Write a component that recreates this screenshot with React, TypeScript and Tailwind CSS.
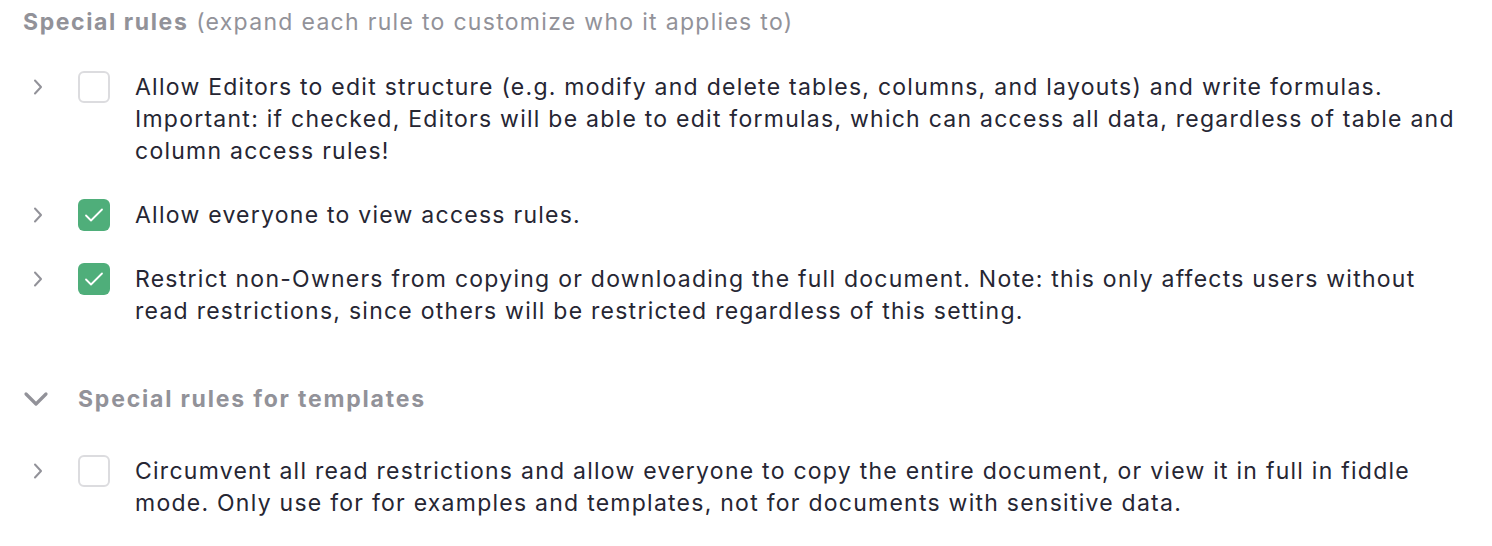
import React from "react";

type Rule = { text: string; checked: boolean };

const mainRules: Rule[] = [
  {
    text: "Allow Editors to edit structure (e.g. modify and delete tables, columns, and layouts) and write formulas. Important: if checked, Editors will be able to edit formulas, which can access all data, regardless of table and column access rules!",
    checked: false,
  },
  { text: "Allow everyone to view access rules.", checked: true },
  {
    text: "Restrict non-Owners from copying or downloading the full document. Note: this only affects users without read restrictions, since others will be restricted regardless of this setting.",
    checked: true,
  },
];

const templateRules: Rule[] = [
  {
    text: "Circumvent all read restrictions and allow everyone to copy the entire document, or view it in full in fiddle mode. Only use for for examples and templates, not for documents with sensitive data.",
    checked: false,
  },
];

function ChevronRight() {
  return (
    <svg width="14" height="16" viewBox="0 0 14 16" fill="none">
      <path d="M4 1.5 L10 8 L4 14.5" stroke="#929299" strokeWidth="2" strokeLinecap="round" strokeLinejoin="round" />
    </svg>
  );
}

function ChevronDown() {
  return (
    <svg width="26" height="18" viewBox="0 0 26 18" fill="none">
      <path d="M3 4 L13 14 L23 4" stroke="#929299" strokeWidth="3.2" strokeLinecap="round" strokeLinejoin="round" />
    </svg>
  );
}

function Checkbox({ checked }: { checked: boolean }) {
  if (checked) {
    return (
      <div className="flex h-8 w-8 shrink-0 items-center justify-center rounded-[6px] bg-[#4fae7a]">
        <svg width="22" height="18" viewBox="0 0 22 18" fill="none">
          <path d="M3 9.5 L8 14.5 L19 3.5" stroke="white" strokeWidth="1.8" strokeLinecap="round" strokeLinejoin="round" />
        </svg>
      </div>
    );
  }
  return <div className="h-8 w-8 shrink-0 rounded-[6px] border-2 border-[#dcdcdf] bg-white" />;
}

function RuleRow({ rule }: { rule: Rule }) {
  return (
    <div className="flex items-start">
      <div className="flex h-8 w-[78px] shrink-0 items-center pl-[31px]">
        <ChevronRight />
      </div>
      <Checkbox checked={rule.checked} />
      <p className="ml-[25px] text-[23px] leading-8 tracking-[1.25px] text-[#262633]">{rule.text}</p>
    </div>
  );
}

export default function App() {
  return (
    <div className="min-h-screen bg-white pr-[24px] pt-[6px]" style={{ fontFamily: "Inter, 'Noto Sans', sans-serif" }}>
      <div className="pl-[23px] text-[23px] leading-8 tracking-[1.3px] text-[#929299]">
        <span className="font-bold tracking-[1.6px]">Special rules</span> (expand each rule to customize who it applies to)
      </div>
      <div className="mt-[33px] flex flex-col gap-8">
        {mainRules.map((r, i) => (
          <RuleRow key={i} rule={r} />
        ))}
      </div>
      <div className="mt-14 flex items-center">
        <div className="flex w-[78px] shrink-0 items-center pl-[23px]">
          <ChevronDown />
        </div>
        <span className="text-[23px] font-bold leading-8 tracking-[1.8px] text-[#929299]">Special rules for templates</span>
      </div>
      <div className="mt-10 flex flex-col gap-8">
        {templateRules.map((r, i) => (
          <RuleRow key={i} rule={r} />
        ))}
      </div>
    </div>
  );
}
